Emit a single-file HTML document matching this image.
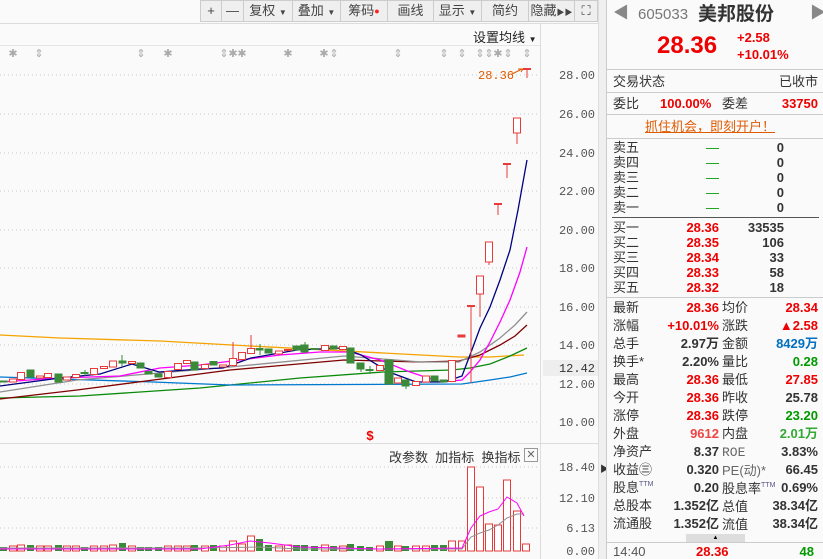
<!DOCTYPE html>
<html><head><meta charset="utf-8"><style>
*{margin:0;padding:0;box-sizing:border-box}
body{width:823px;height:559px;overflow:hidden;background:#fafafa;font-family:"Liberation Sans","Noto Sans CJK SC",sans-serif;position:relative}
.a{position:absolute;white-space:nowrap}
#tb{position:absolute;left:200px;top:0;width:398px;height:22px;background:#efefef;border:1px solid #ccc;display:flex}
#tb div{border-right:1px solid #ccc;font-size:13px;color:#444;text-align:center;line-height:20px}
#rp{position:absolute;left:606px;top:0;width:217px;height:559px;background:#fafafa;border-left:1px solid #ccc}
.r{position:absolute;font-size:13px;line-height:15px;white-space:nowrap}
.hl{position:absolute;left:0;width:217px;height:1px;background:#ccc}
.red{color:#e00;font-weight:bold}.grn{color:#090;font-weight:bold}.dk{color:#333;font-weight:bold}
.lb{color:#333}
sup{font-size:7px;line-height:0;vertical-align:6px;color:#558}
</style></head><body>
<div id="tb">
<div style="width:21px">+</div><div style="width:22px">—</div><div style="width:49px">复权 <span style="font-size:8px">▼</span></div><div style="width:48px">叠加 <span style="font-size:8px">▼</span></div><div style="width:47px">筹码<span style="color:#f22;font-size:9px;vertical-align:top">●</span></div><div style="width:46px">画线</div><div style="width:48px">显示 <span style="font-size:8px">▼</span></div><div style="width:47px">简约</div><div style="width:46px">隐藏<span style="font-size:8px">▶▶</span></div><div style="width:22px;border:none">⛶</div>
</div>
<div class="a" style="left:0;top:23px;width:598px;height:1px;background:#ddd"></div>
<div class="a" style="left:473px;top:27px;font-size:13px;color:#222">设置均线 <span style="font-size:8px">▼</span></div>
<div class="a" style="left:0;top:45px;width:540px;height:1px;background:#e4e4e4"></div>
<svg class="a" style="left:0;top:0" width="600" height="559">
<g fill="#aaa" font-size="11" font-family="Liberation Sans" text-anchor="middle">
<text x="13" y="57">✱</text><text x="39" y="57">⇕</text><text x="141" y="57">⇕</text><text x="168" y="57">✱</text><text x="224" y="57">⇕</text><text x="233" y="57">✱</text><text x="242" y="57">✱</text><text x="288" y="57">✱</text><text x="324" y="57">✱</text><text x="334" y="57">⇕</text><text x="398" y="57">⇕</text><text x="444" y="57">⇕</text><text x="462" y="57">⇕</text><text x="480" y="57">⇕</text><text x="489" y="57">⇕</text><text x="498" y="57">✱</text><text x="508" y="57">⇕</text><text x="527" y="57">⇕</text>
</g>
<g stroke="#c8c8c8" stroke-dasharray="1,3">
<line x1="0" y1="75" x2="540" y2="75"/><line x1="0" y1="114" x2="540" y2="114"/><line x1="0" y1="153" x2="540" y2="153"/><line x1="0" y1="191" x2="540" y2="191"/><line x1="0" y1="230" x2="540" y2="230"/><line x1="0" y1="268" x2="540" y2="268"/><line x1="0" y1="307" x2="540" y2="307"/><line x1="0" y1="345" x2="540" y2="345"/><line x1="0" y1="384" x2="540" y2="384"/><line x1="0" y1="422" x2="540" y2="422"/>
<line x1="0" y1="467" x2="540" y2="467"/><line x1="0" y1="498" x2="540" y2="498"/><line x1="0" y1="528" x2="540" y2="528"/>
</g>
<line x1="540.5" y1="24" x2="540.5" y2="559" stroke="#ddd"/>
<line x1="0" y1="443.5" x2="598" y2="443.5" stroke="#ddd"/>
<rect x="543" y="360" width="55" height="16" fill="#eee"/>
<g font-family="Liberation Mono" font-size="12" fill="#555" text-anchor="end">
<text x="595" y="79">28.00</text><text x="595" y="118">26.00</text><text x="595" y="157">24.00</text><text x="595" y="195">22.00</text><text x="595" y="234">20.00</text><text x="595" y="272">18.00</text><text x="595" y="311">16.00</text><text x="595" y="349">14.00</text><text x="595" y="372" fill="#333">12.42</text><text x="595" y="388">12.00</text><text x="595" y="426">10.00</text>
<text x="595" y="471">18.40</text><text x="595" y="502">12.10</text><text x="595" y="532">6.13</text><text x="595" y="555">0.00</text>
</g>
<text x="478" y="79" font-family="Liberation Mono" font-size="12" fill="#e05a00">28.36</text>
<path d="M512 74 L522 69 M518 69 L523 69 L521 72" stroke="#e05a00" fill="none"/>
<text x="370" y="440" font-size="13" fill="#e00" font-weight="bold" text-anchor="middle">$</text>
<g fill="none" stroke-width="1.3">
<polyline stroke="#f5a300" points="0,335 60,338 160,341 250,346 383,353 459,357 490,357 524,355"/>
<polyline stroke="#0a8a0a" points="0,398 80,396 200,388 300,378 383,372 452,370 470,368 490,364 510,356 527,348"/>
<polyline stroke="#0078d0" points="0,377 153,382 230,385 462,384 490,380 510,377 527,373"/>
<polyline stroke="#800000" points="0,399 77,390 230,370 344,360 421,362 459,361 480,355 500,345 515,336 527,325"/>
<polyline stroke="#909090" points="0,392 77,380 230,367 344,356 421,362 459,362 480,352 500,338 515,325 527,312"/>
<polyline stroke="#ff00ff" points="0,382 60,378 120,376 160,368 200,365 240,360 280,355 320,352 350,352 380,360 410,372 440,382 462,380 470,372 480,360 490,342 500,322 510,300 520,272 527,247"/>
<polyline stroke="#000080" points="0,386 60,378 100,374 132,364 159,372 200,369 223,368 251,358 297,350 343,348 361,355 389,372 416,382 444,382 462,376 473,347 480,328 490,307 500,280 510,250 518,210 527,160"/>
</g>
<g stroke="#e83a3a" fill="#fff">
<rect x="9.5" y="379" width="7" height="3"/><rect x="17.5" y="372.5" width="7" height="7"/><rect x="36.5" y="376" width="7" height="2"/><rect x="44.5" y="373.5" width="7" height="4"/><rect x="63.5" y="377" width="7" height="3"/><rect x="72.5" y="374.5" width="7" height="3"/>
<rect x="90.5" y="368.5" width="7" height="6"/><rect x="100.5" y="366.5" width="7" height="2"/><rect x="109.5" y="361" width="7" height="6"/><rect x="128.5" y="361.5" width="7" height="2"/>
<rect x="164.5" y="371.5" width="7" height="6"/><rect x="174.5" y="363.5" width="7" height="6"/><rect x="183.5" y="360.5" width="7" height="3"/><rect x="201.5" y="364.5" width="7" height="4"/><rect x="219.5" y="365" width="7" height="2"/>
<rect x="229.5" y="358.5" width="7" height="7"/><rect x="238.5" y="352.5" width="7" height="7"/><rect x="247.5" y="348.5" width="7" height="5"/><rect x="275.5" y="351" width="7" height="3"/><rect x="284.5" y="349.5" width="7" height="1"/>
<rect x="321.5" y="345.5" width="7" height="5"/><rect x="339.5" y="346.5" width="7" height="3"/><rect x="376.5" y="365.5" width="7" height="5"/><rect x="394.5" y="378" width="7" height="5"/><rect x="412.5" y="381.5" width="7" height="4"/><rect x="422.5" y="376" width="7" height="6"/><rect x="448.5" y="360.5" width="7" height="21"/>
<rect x="476.5" y="276" width="7" height="18"/><rect x="485.5" y="242" width="7" height="20"/><rect x="513.5" y="118" width="7" height="15"/>
</g>
<g stroke="#e83a3a" fill="#e83a3a">
<line x1="233" y1="342" x2="233" y2="358"/><line x1="251" y1="335" x2="251" y2="348"/>
<rect x="458" y="335" width="7" height="2"/><rect x="467" y="305" width="8" height="2" stroke="none"/><line x1="471" y1="306" x2="471" y2="383"/>
<line x1="480" y1="294" x2="480" y2="317"/><line x1="489" y1="262" x2="489" y2="265"/>
<rect x="494" y="203" width="8" height="2" stroke="none"/><line x1="498" y1="204" x2="498" y2="215"/>
<rect x="503" y="163" width="8" height="2" stroke="none"/><line x1="507" y1="164" x2="507" y2="178"/>
<line x1="517" y1="133" x2="517" y2="144"/>
<rect x="523" y="68" width="8" height="2" stroke="none"/><line x1="527" y1="69" x2="527" y2="78"/>
</g>
<g fill="#3a8a3a" stroke="#3a8a3a">
<rect x="0" y="381" width="7" height="1"/><rect x="27" y="370" width="7" height="7"/><rect x="55" y="374" width="7" height="8"/><rect x="81" y="372.5" width="7" height="1"/><line x1="85" y1="370" x2="85" y2="376"/>
<rect x="119" y="361" width="7" height="2"/><line x1="122" y1="355" x2="122" y2="367"/><rect x="137" y="363" width="7" height="5"/><rect x="145" y="371.5" width="7" height="2.5"/><rect x="155" y="374" width="7" height="3"/>
<rect x="191" y="362" width="7" height="8"/><rect x="210" y="361.5" width="7" height="3.5"/><rect x="256" y="348.5" width="7" height="1.5"/><line x1="260" y1="344" x2="260" y2="355"/><rect x="265" y="349" width="7" height="4"/>
<rect x="293" y="346" width="7" height="4"/><rect x="301" y="345" width="7" height="7"/><line x1="305" y1="342" x2="305" y2="352"/><rect x="311" y="348.5" width="7" height="1"/><rect x="330" y="346" width="7" height="3"/>
<rect x="347" y="348" width="7" height="15"/><rect x="357" y="363" width="7" height="6"/><line x1="361" y1="369" x2="361" y2="372"/><rect x="366" y="369.5" width="7" height="1"/><line x1="370" y1="366" x2="370" y2="374"/>
<rect x="385" y="360" width="8" height="24"/><rect x="402" y="380" width="7" height="6"/><line x1="406" y1="386" x2="406" y2="389"/><rect x="431" y="376" width="7" height="5"/><rect x="440" y="380" width="7" height="2"/>
</g>
<g stroke="#e83a3a" fill="#fff">
<rect x="9.5" y="546" width="7" height="5"/><rect x="17.5" y="545" width="7" height="6"/><rect x="36.5" y="546" width="7" height="5"/><rect x="44.5" y="546" width="7" height="5"/><rect x="63.5" y="546" width="7" height="5"/><rect x="72.5" y="546" width="7" height="5"/><rect x="90.5" y="546" width="7" height="5"/><rect x="100.5" y="546" width="7" height="5"/><rect x="109.5" y="545" width="7" height="6"/><rect x="128.5" y="546" width="7" height="5"/><rect x="164.5" y="546" width="7" height="5"/><rect x="174.5" y="546" width="7" height="5"/><rect x="183.5" y="546" width="7" height="5"/><rect x="201.5" y="546" width="7" height="5"/><rect x="219.5" y="546" width="7" height="5"/>
<rect x="229.5" y="541" width="7" height="10"/><rect x="238.5" y="544" width="7" height="7"/><rect x="247.5" y="536" width="7" height="15"/><rect x="275.5" y="546" width="7" height="5"/><rect x="284.5" y="545" width="7" height="6"/><rect x="321.5" y="545" width="7" height="6"/><rect x="339.5" y="546" width="7" height="5"/><rect x="376.5" y="546" width="7" height="5"/><rect x="394.5" y="546" width="7" height="5"/><rect x="412.5" y="546" width="7" height="5"/><rect x="422.5" y="546" width="7" height="5"/>
<rect x="448.5" y="541" width="7" height="10"/><rect x="458.5" y="541" width="7" height="10"/><rect x="467.5" y="467" width="7" height="84"/><rect x="476.5" y="487" width="7" height="64"/><rect x="485.5" y="524" width="7" height="27"/><rect x="494.5" y="525" width="7" height="26"/><rect x="503.5" y="480" width="7" height="71"/><rect x="513.5" y="511" width="7" height="40"/><rect x="522.5" y="544" width="7" height="7"/>
</g>
<g fill="#3a8a3a">
<rect x="0" y="547" width="7" height="4"/><rect x="27" y="545" width="7" height="6"/><rect x="55" y="545" width="7" height="6"/><rect x="81" y="547" width="7" height="4"/><rect x="119" y="543" width="7" height="8"/><rect x="137" y="547" width="7" height="4"/><rect x="145" y="547" width="7" height="4"/><rect x="155" y="547" width="7" height="4"/><rect x="191" y="545" width="7" height="6"/><rect x="210" y="545" width="7" height="6"/><rect x="256" y="539" width="7" height="12"/><rect x="265" y="545" width="7" height="6"/><rect x="293" y="545" width="7" height="6"/><rect x="301" y="545" width="7" height="6"/><rect x="311" y="546" width="7" height="5"/><rect x="330" y="546" width="7" height="5"/><rect x="347" y="544" width="7" height="7"/><rect x="357" y="546" width="7" height="5"/><rect x="366" y="547" width="7" height="4"/><rect x="385" y="541" width="8" height="10"/><rect x="402" y="546" width="7" height="5"/><rect x="431" y="545" width="7" height="6"/><rect x="440" y="545" width="7" height="6"/>
</g>
<polyline fill="none" stroke="#909090" points="0,548 200,548 260,547 300,549 380,549 462,549 471,537 480,533 489,530 498,525 507,518 517,514 524,514"/>
<polyline fill="none" stroke="#ff00ff" points="0,549 200,549 230,545 250,541 270,543 300,547 340,548 380,549 462,548 471,528 480,516 489,512 498,509 507,497 517,503 524,516"/>
</svg>
<div class="a" style="left:389px;top:447px;font-size:13px;color:#333">改参数&nbsp;&nbsp;加指标&nbsp;&nbsp;换指标</div>
<div class="a" style="left:524px;top:448px;width:14px;height:14px;border:1px solid #999;font-size:11px;line-height:12px;text-align:center;color:#666">✕</div>
<div class="a" style="left:598px;top:0;width:8px;height:559px;background:#efefef;border-left:1px solid #ddd"></div>
<div class="a" style="left:600px;top:462px;font-size:9px;color:#333">▶</div>
<div id="rp">
<div class="r" style="left:6px;top:6px;font-size:16px;color:#888">◀</div>
<div class="r" style="left:31px;top:7px;font-size:15px;color:#777">605033</div>
<div class="r" style="left:91px;top:5px;font-size:19px;line-height:20px;color:#333;font-weight:bold">美邦股份</div>
<div class="r" style="left:203px;top:6px;font-size:16px;color:#888">▶</div>
<div class="r" style="left:50px;top:34px;font-size:24px;line-height:24px;color:#e00;font-weight:bold">28.36</div>
<div class="r red" style="left:130px;top:30px">+2.58</div>
<div class="r red" style="left:130px;top:47px">+10.01%</div>
<div class="hl" style="top:69px"></div>
<div class="r lb" style="left:6px;top:74px">交易状态</div><div class="r lb" style="right:5px;top:74px">已收市</div>
<div class="hl" style="top:92px"></div>
<div class="r lb" style="left:6px;top:96px">委比</div><div class="r red" style="left:53px;top:96px">100.00%</div><div class="r lb" style="left:115px;top:96px">委差</div><div class="r red" style="right:5px;top:96px">33750</div>
<div class="hl" style="top:114px"></div>
<div class="r" style="left:38px;top:119px;color:#e05a00;text-decoration:underline">抓住机会，即刻开户！</div>
<div class="hl" style="top:138px"></div>
<div class="r lb" style="left:6px;top:140px">卖五<br>卖四<br>卖三<br>卖二<br>卖一</div>
<div class="r grn" style="left:99px;top:140px;font-weight:normal">—<br>—<br>—<br>—<br>—</div>
<div class="r dk" style="right:39px;top:140px;text-align:right">0<br>0<br>0<br>0<br>0</div>
<div class="hl" style="top:217px;left:5px;width:207px;background:#555"></div>
<div class="r lb" style="left:6px;top:220px">买一<br>买二<br>买三<br>买四<br>买五</div>
<div class="r red" style="right:104px;top:220px;text-align:right">28.36<br>28.35<br>28.34<br>28.33<br>28.32</div>
<div class="r dk" style="right:39px;top:220px;text-align:right">33535<br>106<br>33<br>58<br>18</div>
<div class="hl" style="top:297px"></div>
<div class="r lb" style="left:6px;top:299px;line-height:18px">最新<br>涨幅<br>总手<br>换手*<br>最高<br>今开<br>涨停<br>外盘<br>净资产<br>收益㊂<br>股息<sup>TTM</sup><br>总股本<br>流通股</div>
<div class="r" style="right:104px;top:299px;line-height:18px;text-align:right;font-weight:bold"><span style="color:#e00">28.36</span><br><span style="color:#e00">+10.01%</span><br><span style="color:#333">2.97万</span><br><span style="color:#333">2.20%</span><br><span style="color:#e00">28.36</span><br><span style="color:#e00">28.36</span><br><span style="color:#e00">28.36</span><br><span style="color:#e44">9612</span><br><span style="color:#333">8.37</span><br><span style="color:#333">0.320</span><br><span style="color:#333">0.20</span><br><span style="color:#333">1.352亿</span><br><span style="color:#333">1.352亿</span></div>
<div class="r lb" style="left:115px;top:299px;line-height:18px">均价<br>涨跌<br>金额<br>量比<br>最低<br>昨收<br>跌停<br>内盘<br><span style="color:#666;font-family:'Liberation Mono'">ROE</span><br><span style="color:#666">PE(动)*</span><br>股息率<sup>TTM</sup><br>总值<br>流值</div>
<div class="r" style="right:5px;top:299px;line-height:18px;text-align:right;font-weight:bold"><span style="color:#e00">28.34</span><br><span style="color:#e00">▲2.58</span><br><span style="color:#0070c0">8429万</span><br><span style="color:#090">0.28</span><br><span style="color:#e00">27.85</span><br><span style="color:#333">25.78</span><br><span style="color:#090">23.20</span><br><span style="color:#3a3">2.01万</span><br><span style="color:#333">3.83%</span><br><span style="color:#333">66.45</span><br><span style="color:#333">0.69%</span><br><span style="color:#333">38.34亿</span><br><span style="color:#333">38.34亿</span></div>
<div class="a" style="left:79px;top:534px;width:59px;height:8px;background:#ddd;font-size:6px;text-align:center;line-height:8px">▲</div>
<div class="hl" style="top:542px"></div>
<div class="r" style="left:6px;top:544px;color:#555">14:40</div>
<div class="r red" style="left:89px;top:544px">28.36</div>
<div class="r grn" style="right:9px;top:544px">48</div>
</div>
</body></html>
